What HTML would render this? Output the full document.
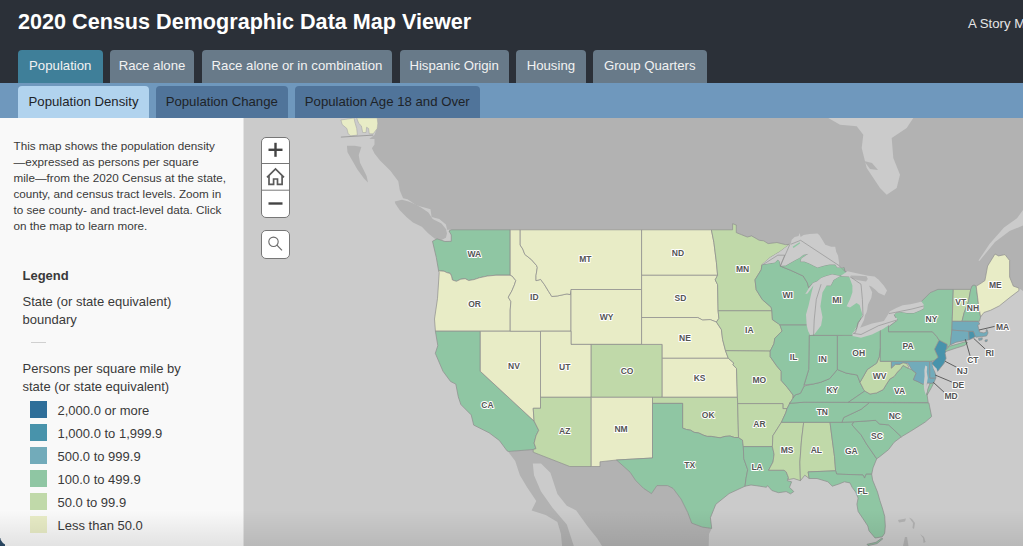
<!DOCTYPE html>
<html><head><meta charset="utf-8"><style>
html,body{margin:0;padding:0;width:1023px;height:546px;overflow:hidden;background:#cbcbcb;font-family:"Liberation Sans",sans-serif}
#hdr{position:absolute;left:0;top:0;width:1023px;height:83px;background:#2b3038}
#title{position:absolute;left:18px;top:6.5px;color:#fff;font-weight:bold;font-size:21.6px;line-height:30px;white-space:nowrap}
#story{position:absolute;left:968px;top:15.5px;color:#e6e6e6;font-size:13.2px;line-height:16px;white-space:nowrap}
.tab{position:absolute;top:50px;height:32.5px;background:#687a89;border-radius:4px 4px 0 0;color:#f2f2f2;font-size:13.2px;line-height:31px;text-align:center;white-space:nowrap}
.tab.act{background:#3f7f99}
#sub{position:absolute;left:0;top:82.5px;width:1023px;height:35.5px;background:#6f98bd}
.stab{position:absolute;top:85.5px;height:32.5px;background:#50749a;border-radius:4px 4px 0 0;color:#1e2328;font-size:13.2px;line-height:31px;text-align:center;white-space:nowrap}
.stab.act{background:#b1d3ee}
#panel{position:absolute;left:0;top:118px;width:243px;height:428px;background:#f9f9f9;box-shadow:1px 0 0 #e3e3e3}
.pt{position:absolute;left:13.5px;color:#3a3a3a;font-size:11.7px;line-height:16px;white-space:nowrap}
.lg{position:absolute;left:22.5px;color:#3a3a3a;font-size:13px;line-height:17.5px;white-space:nowrap}
.sw{position:absolute;left:30px;width:17px;height:17px}
.lt{position:absolute;left:57.5px;color:#3a3a3a;font-size:13px;line-height:19px;white-space:nowrap}
.zb{position:absolute;left:261.2px;width:28.4px;background:#fff;border:1px solid #777;box-sizing:border-box}
#shade{position:absolute;left:0;top:510px;width:1023px;height:36px;background:linear-gradient(to bottom,rgba(0,0,0,0),rgba(0,0,0,0.09))}
</style></head><body>
<svg width="1023" height="546" viewBox="0 0 1023 546" style="position:absolute;left:0;top:0">
<rect x="243" y="118" width="780" height="428" fill="#cbcbcb"/>
<g fill="#b2b2b2"><polygon points="377.2,118.0 377.8,125.9 374.5,135.1 369.3,139.1 374.5,139.1 374.5,144.4 371.9,148.3 374.5,153.6 379.8,160.2 385.1,165.4 390.4,170.7 394.3,176.0 398.3,181.3 399.8,190.5 403.1,198.2 407.5,199.3 416.3,205.3 430.5,209.2 431.6,216.9 439.3,219.1 445.9,224.6 447.0,229.0 446.5,229.8 732.6,229.8 732.6,223.7 736.3,225.0 736.3,232.6 741.8,234.8 747.3,237.0 751.6,235.9 759.3,240.3 763.7,240.8 768.1,243.6 776.9,242.5 785.7,244.7 789.7,244.3 800.0,250.0 845.0,272.0 870.0,290.0 864.0,320.0 856.0,336.0 880.0,327.0 889.0,313.0 897.0,310.0 917.0,307.0 921.4,301.5 930.2,292.7 937.9,289.4 971.0,289.4 976.2,286.1 979.4,284.3 984.9,280.6 987.6,266.0 995.0,254.0 998.6,255.9 1005.0,254.6 1009.6,260.5 1009.6,277.0 1013.3,286.1 1018.8,288.0 1023.0,291.0 1023.0,118.0"/><polygon points="508.2,451.7 533.2,449.5 533.2,452.2 569.8,466.5 591.2,466.5 600.0,466.5 600.0,461.8 616.5,460.0 630.1,472.2 635.5,480.3 643.5,488.3 651.5,493.6 656.9,485.6 667.6,485.6 673.0,488.3 681.0,499.0 687.7,512.4 691.7,523.1 702.4,527.1 711.7,528.4 709.0,534.0 708.7,546.0 602.0,546.0 597.3,538.5 587.9,526.8 576.2,510.4 566.8,505.7 557.4,494.0 550.4,472.8 541.0,463.5 532.8,463.5 534.0,475.2 541.0,491.6 552.7,508.0 566.8,524.5 573.8,546.0 562.1,546.0 560.9,533.8 557.4,522.1 545.7,515.1 531.6,510.4 536.3,501.0 526.9,486.9 519.9,475.2 515.2,461.1"/>
<polygon points="394.8,201.5 402.0,199.8 408.6,201.5 416.3,204.8 421.8,208.1 428.4,212.5 432.7,219.1 441.5,223.5 445.9,229.0 447.0,233.4 445.9,237.7 441.5,239.9 434.9,238.8 428.4,233.4 421.8,226.8 413.0,222.4 406.4,216.9 399.8,210.3 395.4,203.7"/>
<polygon points="346.9,145.7 354.8,145.7 361.4,147.0 358.7,154.9 360.0,162.8 362.7,168.1 366.6,176.0 368.0,182.6 364.0,178.6 357.4,169.4 352.1,160.2 347.5,152.3"/>
<polygon points="898.0,520.0 906.0,518.5 905.0,521.5 899.0,522.5"/>
<polygon points="909.0,517.5 912.0,519.0 915.0,523.0 914.0,529.0 912.5,528.0 913.0,523.0"/>
<polygon points="920.0,534.0 924.0,537.0 925.6,542.0 923.5,543.0 923.0,538.0"/>
<polygon points="903.0,546.0 905.0,537.0 907.0,537.0 908.5,546.0"/>
</g>
<g fill="#cbcbcb"><polygon points="828.3,118.0 840.0,124.7 856.7,126.3 863.3,134.7 861.7,148.0 866.7,168.0 880.0,188.0 886.7,194.7 896.7,188.0 900.0,174.7 893.3,158.0 891.7,138.0 906.7,128.0 913.3,118.0"/><polygon points="978.5,260.5 989.5,244.0 1004.0,227.5 1017.0,218.3 1023.0,210.0 1023.0,225.6 1009.6,231.0 995.0,242.0 979.4,261.0"/></g>
<polygon points="864.0,161.0 872.0,163.0 878.0,170.0 870.0,169.0" fill="#b2b2b2"/>
<g fill="#e8ecc6" stroke="#a0a0a0" stroke-width="0.5"><polygon points="340.9,120.0 342.2,124.6 346.9,128.5 348.2,133.8 350.8,135.8 357.4,135.1 356.7,128.5 354.8,122.0 354.1,118.0"/><polygon points="356.7,118.0 358.7,123.3 361.4,125.9 362.7,132.5 366.0,132.5 366.6,127.2 368.6,128.5 369.3,133.8 373.2,133.8 377.2,128.5 377.8,123.3 377.2,118.0"/></g>
<line x1="340.9" y1="137.1" x2="373.2" y2="135.1" stroke="#999" stroke-width="0.9"/>
<g stroke="#8c8c8c" stroke-width="0.7" stroke-linejoin="round">
<polygon points="451.3,229.8 510.2,229.8 510.2,275.2 496.0,275.2 487.2,276.1 479.3,277.8 474.0,279.6 468.7,280.5 465.2,278.7 460.8,279.2 456.4,281.3 452.4,280.0 451.5,276.1 450.2,273.4 446.7,272.6 444.1,271.2 438.6,270.8 436.3,257.5 432.5,241.3 437.0,238.8 445.0,241.5 451.3,241.3 451.3,235.0 449.0,231.0" fill="#8fc6a3"/>
<polygon points="438.6,270.8 444.1,271.2 446.7,272.6 450.2,273.4 451.5,276.1 452.4,280.0 456.4,281.3 460.8,279.2 465.2,278.7 468.7,280.5 474.0,279.6 479.3,277.8 487.2,276.1 496.0,275.2 510.2,275.2 512.2,276.1 515.8,280.5 514.4,284.9 511.8,291.0 508.3,297.2 510.9,301.6 510.2,310.0 510.2,331.2 435.4,331.2 434.5,319.0 437.5,298.5 439.2,272.6" fill="#e8ecc6"/>
<polygon points="435.4,331.2 480.3,331.2 480.3,371.3 534.1,421.1 538.7,430.3 536.0,435.8 534.1,443.1 536.0,448.6 533.2,449.5 508.5,451.5 507.0,450.8 499.4,440.5 489.1,432.8 473.7,425.1 471.2,414.9 460.9,404.6 458.3,396.9 455.8,384.1 450.6,381.5 443.0,371.3 435.3,353.3 437.8,345.6" fill="#8fc6a3"/>
<polygon points="480.3,331.2 540.5,331.2 540.5,408.3 533.2,408.3 534.1,421.1 480.3,371.3" fill="#e8ecc6"/>
<polygon points="510.2,229.8 520.2,229.8 520.2,245.1 522.8,249.1 524.8,254.4 531.4,259.6 536.6,265.6 537.3,267.5 536.0,275.5 536.0,280.7 540.6,279.4 544.5,284.7 548.5,291.3 551.8,296.5 557.7,295.9 567.0,293.9 570.3,294.6 571.0,290.5 571.0,289.5 571.0,331.2 510.2,331.2 510.2,310.0 510.9,301.6 508.3,297.2 511.8,291.0 514.4,284.9 515.8,280.5 512.2,276.1 510.2,275.2" fill="#e8ecc6"/>
<polygon points="641.6,229.8 641.6,289.5 571.0,289.5 571.0,290.5 570.3,294.6 567.0,293.9 557.7,295.9 551.8,296.5 548.5,291.3 544.5,284.7 540.6,279.4 536.0,280.7 536.0,275.5 537.3,267.5 536.6,265.6 531.4,259.6 524.8,254.4 522.8,249.1 520.2,245.1 520.2,229.8" fill="#e8ecc6"/>
<polygon points="571.0,289.5 641.6,289.5 641.6,344.4 571.0,344.4" fill="#e8ecc6"/>
<polygon points="540.5,331.2 571.0,331.2 571.0,344.4 591.2,344.4 591.2,397.3 540.5,397.3" fill="#e8ecc6"/>
<polygon points="591.2,344.4 662.2,344.4 662.2,397.3 591.2,397.3" fill="#c0d9a9"/>
<polygon points="540.5,397.3 591.2,397.3 591.2,466.5 569.8,466.5 533.2,452.2 533.2,449.5 536.0,448.6 534.1,443.1 536.0,435.8 538.7,430.3 534.1,421.1 533.2,408.3 540.5,408.3" fill="#c0d9a9"/>
<polygon points="591.2,397.3 652.5,397.3 652.5,458.0 616.5,460.0 600.0,461.8 600.0,466.5 591.2,466.5" fill="#e8ecc6"/>
<polygon points="641.6,229.8 711.4,229.8 713.9,242.4 716.4,262.3 717.6,275.3 641.6,275.3" fill="#e8ecc6"/>
<polygon points="641.6,275.3 717.6,275.3 715.2,279.8 717.6,284.7 718.1,310.8 718.9,318.4 716.4,322.0 710.2,319.6 702.7,320.1 697.7,317.5 641.6,317.5" fill="#e8ecc6"/>
<polygon points="641.6,317.5 697.7,317.5 702.7,320.1 710.2,319.6 716.4,322.0 721.4,329.6 722.6,339.5 725.5,350.7 728.3,358.3 662.2,358.3 662.2,344.4 641.6,344.4" fill="#e8ecc6"/>
<polygon points="662.2,358.3 728.3,358.3 733.8,363.0 732.9,364.8 736.5,368.4 737.4,397.3 662.2,397.3" fill="#e8ecc6"/>
<polygon points="652.5,397.3 737.4,397.3 737.7,403.6 738.5,437.5 734.5,437.5 730.0,436.0 725.0,436.4 720.1,437.8 715.3,437.1 711.2,436.4 707.1,436.4 703.0,435.0 698.8,433.0 694.0,432.3 690.6,430.2 686.5,429.5 682.6,428.1 682.6,403.4 652.5,403.4" fill="#c0d9a9"/>
<polygon points="652.5,403.4 682.6,403.4 682.6,428.1 686.5,429.5 690.6,430.2 694.0,432.3 698.8,433.0 703.0,435.0 707.1,436.4 711.2,436.4 715.3,437.1 720.1,437.8 725.0,436.4 730.0,436.0 734.5,437.5 738.5,437.5 742.5,440.1 743.3,446.6 743.8,458.7 747.7,469.7 746.0,478.5 745.0,486.2 729.1,493.6 715.8,504.3 710.4,517.7 711.7,528.4 702.4,527.1 691.7,523.1 687.7,512.4 681.0,499.0 673.0,488.3 667.6,485.6 656.9,485.6 651.5,493.6 643.5,488.3 635.5,480.3 630.1,472.2 616.5,460.0 652.5,458.0" fill="#8fc6a3"/>
<polygon points="711.4,229.8 732.6,229.8 732.6,223.7 736.3,225.0 736.3,232.6 741.8,234.8 747.3,237.0 751.6,235.9 759.3,240.3 763.7,240.8 768.1,243.6 776.9,242.5 785.7,244.7 789.7,244.3 779.8,251.7 769.9,257.7 762.0,264.6 761.2,269.8 755.0,279.8 756.2,289.7 762.4,299.7 771.1,307.2 771.9,310.8 718.1,310.8 717.6,284.7 715.2,279.8 717.6,275.3 716.4,262.3 713.9,242.4" fill="#c0d9a9"/>
<polygon points="718.1,310.8 771.9,310.8 772.4,319.6 779.8,324.4 782.1,331.0 774.8,338.3 773.9,343.8 770.2,351.1 725.5,350.7 722.6,339.5 721.4,329.6 716.4,322.0 718.9,318.4" fill="#c0d9a9"/>
<polygon points="725.5,350.7 770.2,351.1 770.2,356.6 776.6,365.8 781.2,371.3 781.2,380.4 787.6,387.8 793.1,395.0 793.1,398.0 790.0,402.9 787.1,408.6 782.9,408.6 782.9,403.6 737.7,403.6 737.4,397.3 736.5,368.4 732.9,364.8 733.8,363.0 728.3,358.3" fill="#c0d9a9"/>
<polygon points="737.7,403.6 782.9,403.6 782.9,408.6 787.1,408.6 785.7,412.9 781.4,422.3 772.9,435.7 772.4,446.6 743.3,446.6 742.5,440.1 738.5,437.5" fill="#c0d9a9"/>
<polygon points="743.3,446.6 772.4,446.6 774.1,454.3 773.0,462.0 768.6,470.2 784.0,470.2 786.2,471.9 788.4,477.4 787.3,480.7 791.6,481.8 789.5,487.3 793.8,491.6 790.5,493.8 786.2,491.6 778.5,492.7 771.9,490.5 767.5,485.6 766.4,487.3 759.8,486.2 751.0,485.0 745.0,486.2 746.0,478.5 747.7,469.7 743.8,458.7" fill="#8fc6a3"/>
<polygon points="781.4,422.3 803.7,422.3 801.5,440.0 799.9,462.0 800.4,480.7 793.8,478.5 788.4,479.6 788.4,477.4 786.2,471.9 784.0,470.2 768.6,470.2 773.0,462.0 774.1,454.3 772.4,446.6 772.9,435.7" fill="#c0d9a9"/>
<polygon points="803.7,422.3 830.0,422.3 832.3,440.0 834.5,456.5 835.6,470.8 808.1,471.9 809.2,478.5 804.8,475.2 800.4,480.7 799.9,462.0 801.5,440.0" fill="#c0d9a9"/>
<polygon points="830.0,422.3 853.8,421.8 852.0,424.9 861.1,434.9 866.6,444.1 876.7,458.8 873.0,467.9 871.7,474.2 866.2,474.2 864.6,478.1 863.0,475.0 836.7,474.1 835.6,470.8 834.5,456.5 832.3,440.0" fill="#8fc6a3"/>
<polygon points="808.1,471.9 835.6,470.8 836.7,474.1 863.0,475.0 864.6,478.1 866.2,474.2 871.7,474.2 872.6,480.0 877.5,492.1 879.9,500.6 882.3,507.8 884.7,516.3 885.3,526.0 884.7,533.2 882.3,536.8 875.1,538.0 869.0,530.8 867.8,526.0 863.0,518.7 858.1,511.4 856.9,504.2 858.1,498.1 855.7,492.1 852.1,487.3 850.0,482.9 844.4,481.8 838.9,484.0 832.3,486.2 827.9,481.8 817.0,478.5 809.2,478.5" fill="#8fc6a3"/>
<polygon points="867.0,544.3 876.0,542.3 881.5,538.3 882.8,538.8 877.0,543.6 868.0,545.6" fill="#8fc6a3"/>
<polygon points="853.8,421.8 875.8,420.3 879.4,424.0 888.6,424.9 901.4,436.8 894.1,442.3 888.6,449.6 879.4,456.9 876.7,458.8 866.6,444.1 861.1,434.9 852.0,424.9" fill="#8fc6a3"/>
<polygon points="841.9,422.3 843.7,417.5 861.1,409.3 869.4,402.6 928.9,402.9 931.6,416.6 925.2,422.1 917.9,426.7 910.6,431.3 901.4,436.8 888.6,424.9 879.4,424.0 875.8,420.3 853.8,421.8" fill="#8fc6a3"/>
<polygon points="789.5,403.3 804.1,402.2 848.3,402.3 869.4,402.6 861.1,409.3 843.7,417.5 841.9,422.3 781.4,422.3 785.7,412.9 787.1,408.6 790.0,402.9" fill="#8fc6a3"/>
<polygon points="793.1,398.0 795.0,395.0 800.4,393.3 804.1,386.0 813.3,384.0 820.6,382.3 829.7,378.6 837.3,369.5 846.2,373.1 857.2,375.0 860.0,382.3 863.7,389.6 864.8,391.0 848.3,402.3 804.1,402.2 789.5,403.3 790.0,402.9" fill="#8fc6a3"/>
<polygon points="848.3,402.3 864.8,391.0 870.0,394.0 876.6,392.9 883.2,389.6 886.5,384.1 889.8,379.1 894.2,376.4 897.5,372.0 900.8,368.7 903.0,365.4 907.9,368.1 911.8,369.8 916.2,373.1 913.4,379.7 918.4,381.9 922.7,384.1 927.1,383.0 925.0,390.0 927.1,395.1 928.2,402.5" fill="#8fc6a3"/>
<polygon points="933.7,383.0 931.5,387.4 927.1,395.1 927.7,389.6 929.3,385.2 930.0,383.3" fill="#8fc6a3"/>
<polygon points="880.4,347.5 880.4,361.3 891.4,361.3 891.4,368.1 895.3,364.3 899.7,364.3 903.0,362.6 906.3,363.2 908.5,366.5 907.9,368.1 903.0,365.4 900.8,368.7 897.5,372.0 894.2,376.4 889.8,379.1 886.5,384.1 883.2,389.6 876.6,392.9 870.0,394.0 864.8,391.0 863.7,389.6 860.0,382.3 867.3,369.5 876.6,363.2 879.3,356.6" fill="#c0d9a9"/>
<polygon points="891.4,361.3 929.6,361.3 929.9,378.0 935.9,378.0 933.7,383.0 930.0,383.3 927.1,383.0 922.7,384.1 918.4,381.9 913.4,379.7 916.2,373.1 911.8,369.8 907.9,363.2 906.3,363.2 903.0,362.6 899.7,364.3 895.3,364.3 891.4,368.1" fill="#72abba"/>
<polygon points="929.6,361.3 932.1,361.0 932.5,364.0 933.7,368.7 935.9,375.3 935.9,378.0 929.9,378.0" fill="#72abba"/>
<polygon points="939.1,340.1 947.1,344.2 946.6,350.2 945.1,353.2 946.1,358.3 944.1,363.3 940.1,368.3 937.6,371.4 932.0,363.3 934.5,360.3 938.1,357.3 934.5,349.2 937.0,344.2" fill="#4893ab"/>
<polygon points="880.2,326.8 888.5,324.6 888.5,331.7 932.4,331.7 936.8,336.6 939.1,340.1 937.0,344.2 934.5,349.2 938.1,357.3 934.5,360.3 932.1,361.0 929.6,361.3 880.2,361.3" fill="#8fc6a3"/>
<polygon points="888.5,331.7 888.5,326.8 897.3,320.2 894.0,314.7 896.2,312.5 901.6,311.9 907.1,313.0 913.7,313.0 920.3,310.3 923.6,308.6 921.4,301.5 930.2,292.7 937.9,289.4 953.3,289.4 952.7,307.0 952.2,321.3 951.9,330.1 950.3,344.9 947.5,347.5 947.1,344.2 939.1,340.1 936.8,336.6 932.4,331.7" fill="#8fc6a3"/>
<polygon points="945.1,350.6 949.6,346.2 959.2,343.6 965.6,341.7 967.5,342.5 966.9,343.6 964.4,345.5 956.0,348.1 946.4,351.3" fill="#8fc6a3"/>
<polygon points="953.3,289.4 970.7,289.4 968.5,301.5 964.2,312.5 962.0,321.3 952.2,321.3 952.7,307.0" fill="#c0d9a9"/>
<polygon points="970.7,289.4 972.0,286.0 974.0,285.0 976.2,286.1 978.4,303.7 980.6,316.9 979.5,321.2 962.0,321.2 964.2,312.5 968.5,301.5" fill="#8fc6a3"/>
<polygon points="976.2,286.1 979.4,284.3 984.9,280.6 987.6,266.0 995.0,254.0 998.6,255.9 1005.0,254.6 1009.6,260.5 1009.6,277.0 1013.3,286.1 1018.8,288.0 1019.0,290.5 1010.3,297.1 999.3,305.9 990.5,310.3 983.9,312.5 980.6,316.9 978.4,303.7" fill="#e8ecc6"/>
<polygon points="952.2,321.3 978.3,321.5 979.8,324.0 977.8,325.0 978.5,328.2 979.5,332.0 984.0,333.0 986.5,331.5 986.0,329.8 987.2,329.8 988.0,333.0 986.5,336.0 981.4,336.6 975.9,337.2 975.3,336.5 973.3,331.4 968.8,331.4 951.9,330.1" fill="#72abba"/>
<polygon points="978.5,338.5 982.3,337.8 982.0,339.8 979.0,340.4" fill="#72abba"/>
<polygon points="985.0,340.0 987.4,339.7 987.0,341.5 985.2,341.7" fill="#72abba"/>
<polygon points="951.9,330.1 968.8,331.4 969.2,339.7 965.6,340.4 956.0,342.3 950.3,344.9" fill="#72abba"/>
<polygon points="968.8,331.4 973.3,331.4 975.3,336.5 972.0,338.5 969.2,339.7" fill="#4893ab"/>
<polygon points="837.3,335.4 853.3,333.4 861.0,334.5 878.6,325.7 880.2,325.5 880.2,347.5 879.3,356.6 876.6,363.2 867.3,369.5 860.0,382.3 857.2,375.0 846.2,373.1 837.3,369.5" fill="#8fc6a3"/>
<polygon points="809.2,335.4 837.3,335.4 837.3,369.5 829.7,378.6 820.6,382.3 813.3,384.0 804.1,385.0 808.7,369.5" fill="#8fc6a3"/>
<polygon points="779.8,324.8 814.9,324.8 813.6,335.4 809.2,335.4 808.7,369.5 804.1,384.5 804.1,386.0 800.4,393.3 795.0,395.0 793.1,398.0 793.1,395.0 787.6,387.8 781.2,380.4 781.2,371.3 776.6,365.8 770.2,356.6 770.2,351.1 773.9,343.8 774.8,338.3 782.1,331.0" fill="#8fc6a3"/>
<polygon points="762.0,264.6 774.8,262.6 777.8,259.6 779.8,261.6 780.3,266.1 790.7,270.3 803.2,276.0 807.4,282.9 808.7,287.7 812.9,282.9 821.1,284.2 816.3,299.4 814.2,320.0 814.9,324.8 779.8,324.8 772.4,319.6 771.9,310.8 771.1,307.2 762.4,299.7 756.2,289.7 755.0,279.8 761.2,269.8" fill="#8fc6a3"/>
<polygon points="780.3,266.1 785.7,265.6 792.6,261.6 799.6,257.7 803.5,254.7 808.5,253.7 805.5,255.7 801.5,258.6 800.6,261.6 804.5,261.6 809.5,263.6 813.4,265.6 817.4,267.5 824.3,265.6 829.2,264.6 835.2,264.6 837.2,267.5 844.1,267.5 845.0,271.5 847.0,272.5 850.0,273.5 840.4,276.0 832.1,274.6 826.6,276.0 821.1,278.1 817.0,281.5 812.9,282.9 808.7,287.7 807.4,282.9 803.2,276.0 790.7,270.3" fill="#8fc6a3"/>
<polygon points="814.9,324.8 814.2,320.0 816.3,299.4 821.1,284.2 826.6,285.6 830.7,285.6 833.5,280.1 837.6,277.4 840.4,276.0 850.0,276.7 861.0,284.2 862.4,299.4 863.0,315.9 858.2,322.7 855.5,332.4 853.3,333.4 853.0,335.4 837.3,335.4 813.6,335.4 813.6,333.7" fill="#8fc6a3"/>
</g>
<g fill="#cbcbcb">
<polygon points="762.0,264.6 769.9,257.7 779.8,251.7 787.7,245.8 790.7,243.8 791.7,239.8 794.6,236.9 798.6,235.9 799.6,232.9 800.6,236.9 803.5,234.9 809.5,233.9 817.4,233.4 819.3,234.9 822.3,239.8 825.3,244.8 831.2,246.8 835.2,246.8 836.2,251.7 838.1,255.7 839.1,263.6 839.1,266.6 844.1,267.5 837.2,267.5 835.2,264.6 829.2,264.6 824.3,265.6 817.4,267.5 813.4,265.6 809.5,263.6 804.5,261.6 800.6,261.6 801.5,258.6 805.5,255.7 808.5,253.7 803.5,254.7 799.6,257.7 792.6,261.6 785.7,265.6 780.8,265.6 779.8,261.6 777.8,259.6 774.8,262.6"/>
<polygon points="840.4,276.0 832.1,274.6 826.6,276.0 821.1,278.1 817.0,281.5 812.9,282.9 808.7,288.4 805.3,293.9 807.5,293.5 813.5,285.2 811.5,292.5 808.7,304.9 806.0,314.5 806.7,325.5 808.1,331.0 810.1,335.1 814.2,334.4 821.1,325.5 822.5,317.2 820.4,306.2 822.5,292.5 826.6,285.6 830.7,285.6 833.5,280.1 837.6,277.4"/>
<polygon points="840.4,276.0 849.1,276.5 852.4,285.6 852.4,292.2 849.9,299.6 846.6,306.2 850.0,307.6 856.5,302.9 859.6,304.9 862.4,314.5 859.6,322.7 855.5,328.2 853.5,331.0 855.8,328.8 858.8,323.5 863.2,318.0 866.5,312.5 867.2,310.0 868.0,304.6 871.3,298.0 872.2,292.2 868.9,285.6 871.3,286.4 875.4,289.7 878.7,293.0 884.5,295.5 887.0,290.6 883.7,285.6 878.7,279.8 874.6,276.5 868.0,275.7 864.7,274.9 847.4,271.2 845.7,272.4"/>
<polygon points="852.5,336.0 861.0,337.7 872.0,334.5 883.0,329.0 896.2,320.2 897.2,318.6 896.2,317.8 883.0,321.3 872.0,323.5 856.6,329.0 852.5,333.0"/>
<polygon points="889.0,313.6 889.6,311.4 896.2,308.1 902.7,305.3 910.4,304.2 918.1,302.6 921.4,301.5 923.6,304.2 923.6,308.6 920.3,310.3 913.7,313.0 907.1,313.0 901.6,311.9 896.2,312.5 894.0,314.7"/>
<polygon points="925.3,365.5 927.2,366.5 926.8,372.0 927.8,378.0 926.8,384.0 927.0,390.0 925.8,395.0 924.2,390.0 923.8,384.0 924.6,376.0 924.4,370.0"/>
<polygon points="932.3,364.5 936.5,368.5 937.5,371.5 935.5,372.0 933.7,368.7"/>
</g>
<polygon points="792.6,246.8 799.6,242.3 800.2,243.3 793.5,247.9" fill="#8fc6a3"/>
<polygon points="850.7,275.6 858.0,275.8 866.5,276.3 867.8,279.0 866.0,281.5 858.0,280.2 852.0,278.5" fill="#b2b2b2"/>
<g fill="none" stroke="#8c8c8c" stroke-width="0.6">
<polyline points="763.0,264.6 777.8,255.2 784.7,255.2 780.3,266.1"/>
<polyline points="789.7,244.8 780.3,266.1"/>
<polyline points="790.7,244.3 800.6,240.3 839.1,265.6 845.0,271.5"/>
<polyline points="850.0,276.7 861.0,284.2 862.4,299.4 863.0,315.9 858.2,322.7 855.5,332.4 853.3,333.4 861.0,334.5 878.6,325.7 896.2,320.2"/>
<polyline points="821.1,284.2 816.3,299.4 814.2,320.0 813.6,335.4"/>
<polyline points="889.0,313.6 897.0,312.0 912.0,309.0 923.6,306.0"/>
</g>
<g stroke="#444" stroke-width="0.8">
<line x1="979" y1="330" x2="994.6" y2="326.4"/>
<line x1="973.6" y1="338.3" x2="985.5" y2="349.3"/>
<line x1="965.3" y1="339.2" x2="970" y2="355.7"/>
<line x1="945.1" y1="361.3" x2="956.7" y2="367.3"/>
<line x1="935.1" y1="375" x2="952.5" y2="382.3"/>
<line x1="933.3" y1="382.3" x2="944.2" y2="392.3"/>
</g>
<g font-family="Liberation Sans, sans-serif" font-weight="bold" font-size="8.5" text-anchor="middle" fill="#555" stroke="#fff" stroke-width="2" paint-order="stroke" stroke-linejoin="round">
<text x="474.4" y="256.9">WA</text>
<text x="474.5" y="306.6">OR</text>
<text x="487.4" y="407.7">CA</text>
<text x="514" y="369.1">NV</text>
<text x="534.3" y="299.6">ID</text>
<text x="585.3" y="262.0">MT</text>
<text x="606.5" y="319.9">WY</text>
<text x="564.7" y="369.6">UT</text>
<text x="627" y="374.1">CO</text>
<text x="564.7" y="433.6">AZ</text>
<text x="621" y="431.7">NM</text>
<text x="678" y="255.9">ND</text>
<text x="680.5" y="300.5">SD</text>
<text x="685" y="340.7">NE</text>
<text x="699.6" y="381.1">KS</text>
<text x="708.2" y="417.8">OK</text>
<text x="689.7" y="467.6">TX</text>
<text x="742.5" y="271.7">MN</text>
<text x="749.3" y="332.9">IA</text>
<text x="759.3" y="382.6">MO</text>
<text x="759.4" y="426.5">AR</text>
<text x="757.1" y="470.2">LA</text>
<text x="787.1" y="453.4">MS</text>
<text x="816.3" y="452.5">AL</text>
<text x="851.3" y="454.4">GA</text>
<text x="862.6" y="494.4">FL</text>
<text x="877" y="439.1">SC</text>
<text x="894.8" y="418.5">NC</text>
<text x="822.3" y="414.6">TN</text>
<text x="832.4" y="393.3">KY</text>
<text x="793.6" y="359.7">IL</text>
<text x="822.6" y="362.4">IN</text>
<text x="858.7" y="356.0">OH</text>
<text x="837" y="303.1">MI</text>
<text x="787.6" y="297.6">WI</text>
<text x="908.1" y="349.3">PA</text>
<text x="931.5" y="321.8">NY</text>
<text x="960.8" y="305.3">VT</text>
<text x="972.9" y="310.8">NH</text>
<text x="995.3" y="288.1">ME</text>
<text x="879.5" y="378.9">WV</text>
<text x="899.6" y="393.9">VA</text>
<text x="1002.5" y="329.5">MA</text>
<text x="989.7" y="356.1">RI</text>
<text x="972.9" y="362.7">CT</text>
<text x="962.2" y="373.5">NJ</text>
<text x="958.3" y="387.9">DE</text>
<text x="951" y="398.6">MD</text>
</g>
</svg>
<div id="hdr"><div id="title">2020 Census Demographic Data Map Viewer</div><div id="story">A Story Map</div></div>
<div class="tab act" style="left:18px;width:84.50px">Population</div><div class="tab" style="left:110px;width:84.00px">Race alone</div><div class="tab" style="left:202px;width:190.00px">Race alone or in combination</div><div class="tab" style="left:399.5px;width:109.25px">Hispanic Origin</div><div class="tab" style="left:516.25px;width:69.25px">Housing</div><div class="tab" style="left:593px;width:113.50px">Group Quarters</div>
<div id="sub"></div>
<div class="stab act" style="left:18px;width:131.00px">Population Density</div><div class="stab" style="left:156px;width:131.50px">Population Change</div><div class="stab" style="left:295px;width:184.50px">Population Age 18 and Over</div>
<div id="panel">
<div class="pt" style="top:19.5px">This map shows the population density<br>—expressed as persons per square<br>mile—from the 2020 Census at the state,<br>county, and census tract levels. Zoom in<br>to see county- and tract-level data. Click<br>on the map to learn more.</div>
<div class="lg" style="top:149px;font-weight:bold">Legend</div>
<div class="lg" style="top:175px">State (or state equivalent)<br>boundary</div>
<div style="position:absolute;left:31px;top:223.5px;width:15px;height:1px;background:#d0d0d0"></div>
<div class="lg" style="top:242px">Persons per square mile by<br>state (or state equivalent)</div>
</div>
<div style="position:absolute;left:0;top:0"><div class="sw" style="top:401px;background:#2e6e99"></div><div class="lt" style="top:401px">2,000.0 or more</div><div class="sw" style="top:424px;background:#4893ab"></div><div class="lt" style="top:424px">1,000.0 to 1,999.9</div><div class="sw" style="top:447px;background:#72abba"></div><div class="lt" style="top:447px">500.0 to 999.9</div><div class="sw" style="top:470px;background:#8fc6a3"></div><div class="lt" style="top:470px">100.0 to 499.9</div><div class="sw" style="top:493px;background:#c0d9a9"></div><div class="lt" style="top:493px">50.0 to 99.9</div><div class="sw" style="top:516px;background:#e8ecc6"></div><div class="lt" style="top:516px">Less than 50.0</div></div>
<div class="zb" style="top:136.7px;height:81.6px;border-radius:5px"></div>
<div class="zb" style="top:230px;height:28.6px;border-radius:5px"></div>
<svg width="1023" height="546" style="position:absolute;left:0;top:0">
<g stroke="#777" stroke-width="1"><line x1="261.5" y1="163.5" x2="289.5" y2="163.5"/><line x1="261.5" y1="190.2" x2="289.5" y2="190.2"/></g>
<g stroke="#444" stroke-width="2.4"><line x1="268.5" y1="149.8" x2="282.5" y2="149.8"/><line x1="275.5" y1="142.8" x2="275.5" y2="156.8"/><line x1="268.5" y1="203.5" x2="282.5" y2="203.5"/></g>
<path d="M267,177.4 L275.5,169 L284,177.4 M269,175.6 V184.4 H273.6 V179 H277.5 V184.4 H282.1 V175.6" fill="none" stroke="#5a5a5a" stroke-width="1.7" stroke-linejoin="miter"/>
<circle cx="273.5" cy="241.8" r="4.7" fill="none" stroke="#6a6a6a" stroke-width="1.1"/>
<line x1="276.9" y1="245.2" x2="282" y2="250.4" stroke="#6a6a6a" stroke-width="1.2"/>
</svg>
<div style="position:absolute;left:0;top:538px;width:5px;height:8px;background:#2b4a66;border-radius:0 0 0 0"></div>
<div style="position:absolute;left:0;top:530px;width:14px;height:16px;background:#f9f9f9;border-radius:0 0 0 10px;z-index:0"></div>
<div id="shade"></div>
</body></html>
